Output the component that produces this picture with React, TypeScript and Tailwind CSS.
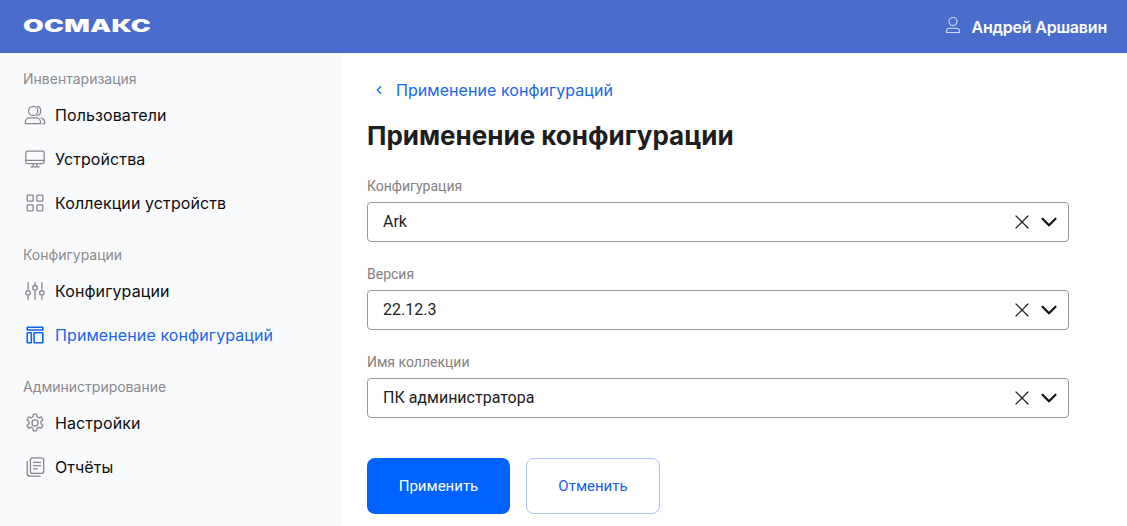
import { JSX, ReactNode } from 'react';
import { ChevronDown, ChevronLeft, X } from 'lucide-react';

const stroke = {
  fill: 'none',
  stroke: 'currentColor',
  strokeWidth: 1.4,
  strokeLinecap: 'round' as const,
  strokeLinejoin: 'round' as const,
};

function Icon({ children }: { children: ReactNode }): JSX.Element {
  return (
    <svg viewBox="0 0 24 24" className="h-[22px] w-[22px] shrink-0" {...stroke}>
      {children}
    </svg>
  );
}

const UsersIcon = () => (
  <Icon>
    <circle cx="10" cy="7.500" r="5" />
    <path d="M14.500 2.600c2.200.4 3.700 2.500 3.700 4.900s-1.500 4.500-3.700 4.900" />
    <path d="M1.500 21.500v-1.800c0-2.500 2-4.500 4.500-4.500h7.500c2.500 0 4.500 2 4.500 4.500v1.800z" />
    <path d="M19 15.500c2 .6 3.500 2.200 3.500 4.200v1.800h-2" />
  </Icon>
);

const MonitorIcon = () => (
  <Icon>
    <rect x="2" y="3.500" width="20" height="13.500" rx="2" />
    <path d="M2 13.500h20M10 17v3.500M14 17v3.500M7.500 20.500h9" />
  </Icon>
);

const GridIcon = () => (
  <Icon>
    <rect x="3.500" y="3.500" width="6.500" height="6.500" rx="0.800" />
    <rect x="14" y="3.500" width="6.500" height="6.500" rx="0.800" />
    <rect x="3.500" y="14" width="6.500" height="6.500" rx="0.800" />
    <rect x="14" y="14" width="6.500" height="6.500" rx="0.800" />
  </Icon>
);

const SlidersIcon = () => (
  <Icon>
    <path d="M4.500 3v7M4.500 17.500V21M12 3v2M12 12v9M19.500 3v7M19.500 17.500V21" />
    <circle cx="4.500" cy="14" r="2.500" />
    <circle cx="12" cy="8.500" r="2.500" />
    <circle cx="19.500" cy="14" r="2.500" />
  </Icon>
);

const LayoutIcon = () => (
  <svg viewBox="0 0 24 24" className="h-[22px] w-[22px] shrink-0" {...stroke} strokeWidth={1.7}>
    <path d="M3.500 3.500h17v3h-17z" />
    <rect x="3.500" y="9.500" width="4.500" height="11" rx="0.500" />
    <rect x="11" y="9.500" width="9.500" height="11" rx="0.500" />
  </svg>
);

const GearIcon = () => (
  <Icon>
    <circle cx="12" cy="12" r="3.300" />
    <path d="M10.300 2.300h3.400l.6 2.900 1.900 1.100 2.800-.9 1.700 3-2.200 2v2.200l2.200 2-1.700 3-2.800-.9-1.900 1.100-.6 2.900h-3.400l-.6-2.900-1.900-1.100-2.800.9-1.700-3 2.200-2v-2.200l-2.200-2 1.700-3 2.800.9 1.900-1.100z" />
  </Icon>
);

const ReportIcon = () => (
  <Icon>
    <rect x="7" y="2" width="14.500" height="17" rx="2.500" />
    <path d="M10.500 7h7.500M10.500 10.500h7.500M10.500 14h4" />
    <path d="M3.500 6v13c0 1.800 1.200 3 3 3h11" />
  </Icon>
);

const groups = [
  {
    title: 'Инвентаризация',
    items: [
      { label: 'Пользователи', icon: <UsersIcon /> },
      { label: 'Устройства', icon: <MonitorIcon /> },
      { label: 'Коллекции устройств', icon: <GridIcon /> },
    ],
  },
  {
    title: 'Конфигурации',
    items: [
      { label: 'Конфигурации', icon: <SlidersIcon /> },
      { label: 'Применение конфигураций', icon: <LayoutIcon />, active: true },
    ],
  },
  {
    title: 'Администрирование',
    items: [
      { label: 'Настройки', icon: <GearIcon /> },
      { label: 'Отчёты', icon: <ReportIcon /> },
    ],
  },
];

const fields = [
  { label: 'Конфигурация', value: 'Ark' },
  { label: 'Версия', value: '22.12.3' },
  { label: 'Имя коллекции', value: 'ПК администратора' },
];

function Sidebar(): JSX.Element {
  return (
    <aside className="flex w-[343px] shrink-0 flex-col gap-5 bg-[#f9fafc] pl-[23px] pt-4">
      {groups.map((group) => (
        <div key={group.title}>
          <div className="text-sm leading-[20px] text-[#8a8a8e]">{group.title}</div>
          <ul className="mt-1">
            {group.items.map((item) => (
              <li
                key={item.label}
                className={`flex h-11 items-center gap-[9px] pl-px ${
                  item.active ? 'text-[#1a66e8]' : 'text-[#0d0d0f]'
                }`}
              >
                <span className={item.active ? 'text-[#0a66f0]' : 'text-[#85878c]'}>{item.icon}</span>
                <span className="text-base tracking-[0.1px]">{item.label}</span>
              </li>
            ))}
          </ul>
        </div>
      ))}
    </aside>
  );
}

function SelectField({ label, value }: { label: string; value: string }): JSX.Element {
  return (
    <div>
      <div className="font-['Roboto',sans-serif] text-sm leading-[20px] text-[#85807f]">{label}</div>
      <div className="mt-[6px] flex h-10 items-center gap-[2px] rounded-[4px] border border-[#9a9ca3] pl-[15px] pr-[6px]">
        <span className="flex-1 font-['Roboto',sans-serif] text-base text-[#1d1d1f]">{value}</span>
        <X className="h-6 w-6 text-[#222222]" strokeWidth={1.2} />
        <ChevronDown className="h-[26px] w-[26px] text-[#111111]" strokeWidth={2} />
      </div>
    </div>
  );
}

export default function App(): JSX.Element {
  return (
    <div className="flex h-[526px] w-[1127px] flex-col overflow-hidden bg-white font-['Inter',sans-serif]">
      <header className="flex h-[53px] shrink-0 items-center justify-between bg-[#4a6dcd] pl-[23px] pr-5 text-white">
        <span className="origin-left scale-x-[1.57] text-[17px] font-black leading-none tracking-[0.01em]">ОСМАКС</span>
        <div className="flex items-center gap-[10px]">
          <svg viewBox="0 0 16 18" className="mb-1 h-[18px] w-4 text-[#d5def5]" fill="none" stroke="currentColor" strokeWidth="1.100">
            <circle cx="8" cy="5.500" r="4" />
            <path d="M1.500 16.500v-1c0-2 1.500-3.300 3.300-3.300h6.400c1.800 0 3.300 1.300 3.300 3.300v1z" />
          </svg>
          <span className="text-base font-semibold tracking-[-0.2px]">Андрей Аршавин</span>
        </div>
      </header>
      <div className="flex flex-1">
        <Sidebar />
        <main className="w-[726px] pl-[24px] pt-[25px]">
          <a className="flex items-center gap-[10px] pl-[5px] text-base leading-6 tracking-[0.05px] text-[#1a66e8]">
            <ChevronLeft className="h-[14px] w-[14px] text-[#0a66f0]" strokeWidth={2} />
            Применение конфигураций
          </a>
          <h1 className="mt-[18px] text-[26px] font-bold leading-[32px] text-[#1d1d20]">Применение конфигурации</h1>
          <div className="mt-6 flex flex-col gap-[22px]">
            {fields.map((field) => (
              <SelectField key={field.label} label={field.label} value={field.value} />
            ))}
          </div>
          <div className="mt-10 flex gap-4 font-['Roboto',sans-serif] text-[15px]">
            <button className="h-14 w-[143px] rounded-[8px] bg-[#0062ff] text-white">Применить</button>
            <button className="h-14 w-[134px] rounded-[8px] border border-[#a8c4fb] bg-white text-[#1a5cf0]">
              Отменить
            </button>
          </div>
        </main>
      </div>
    </div>
  );
}
